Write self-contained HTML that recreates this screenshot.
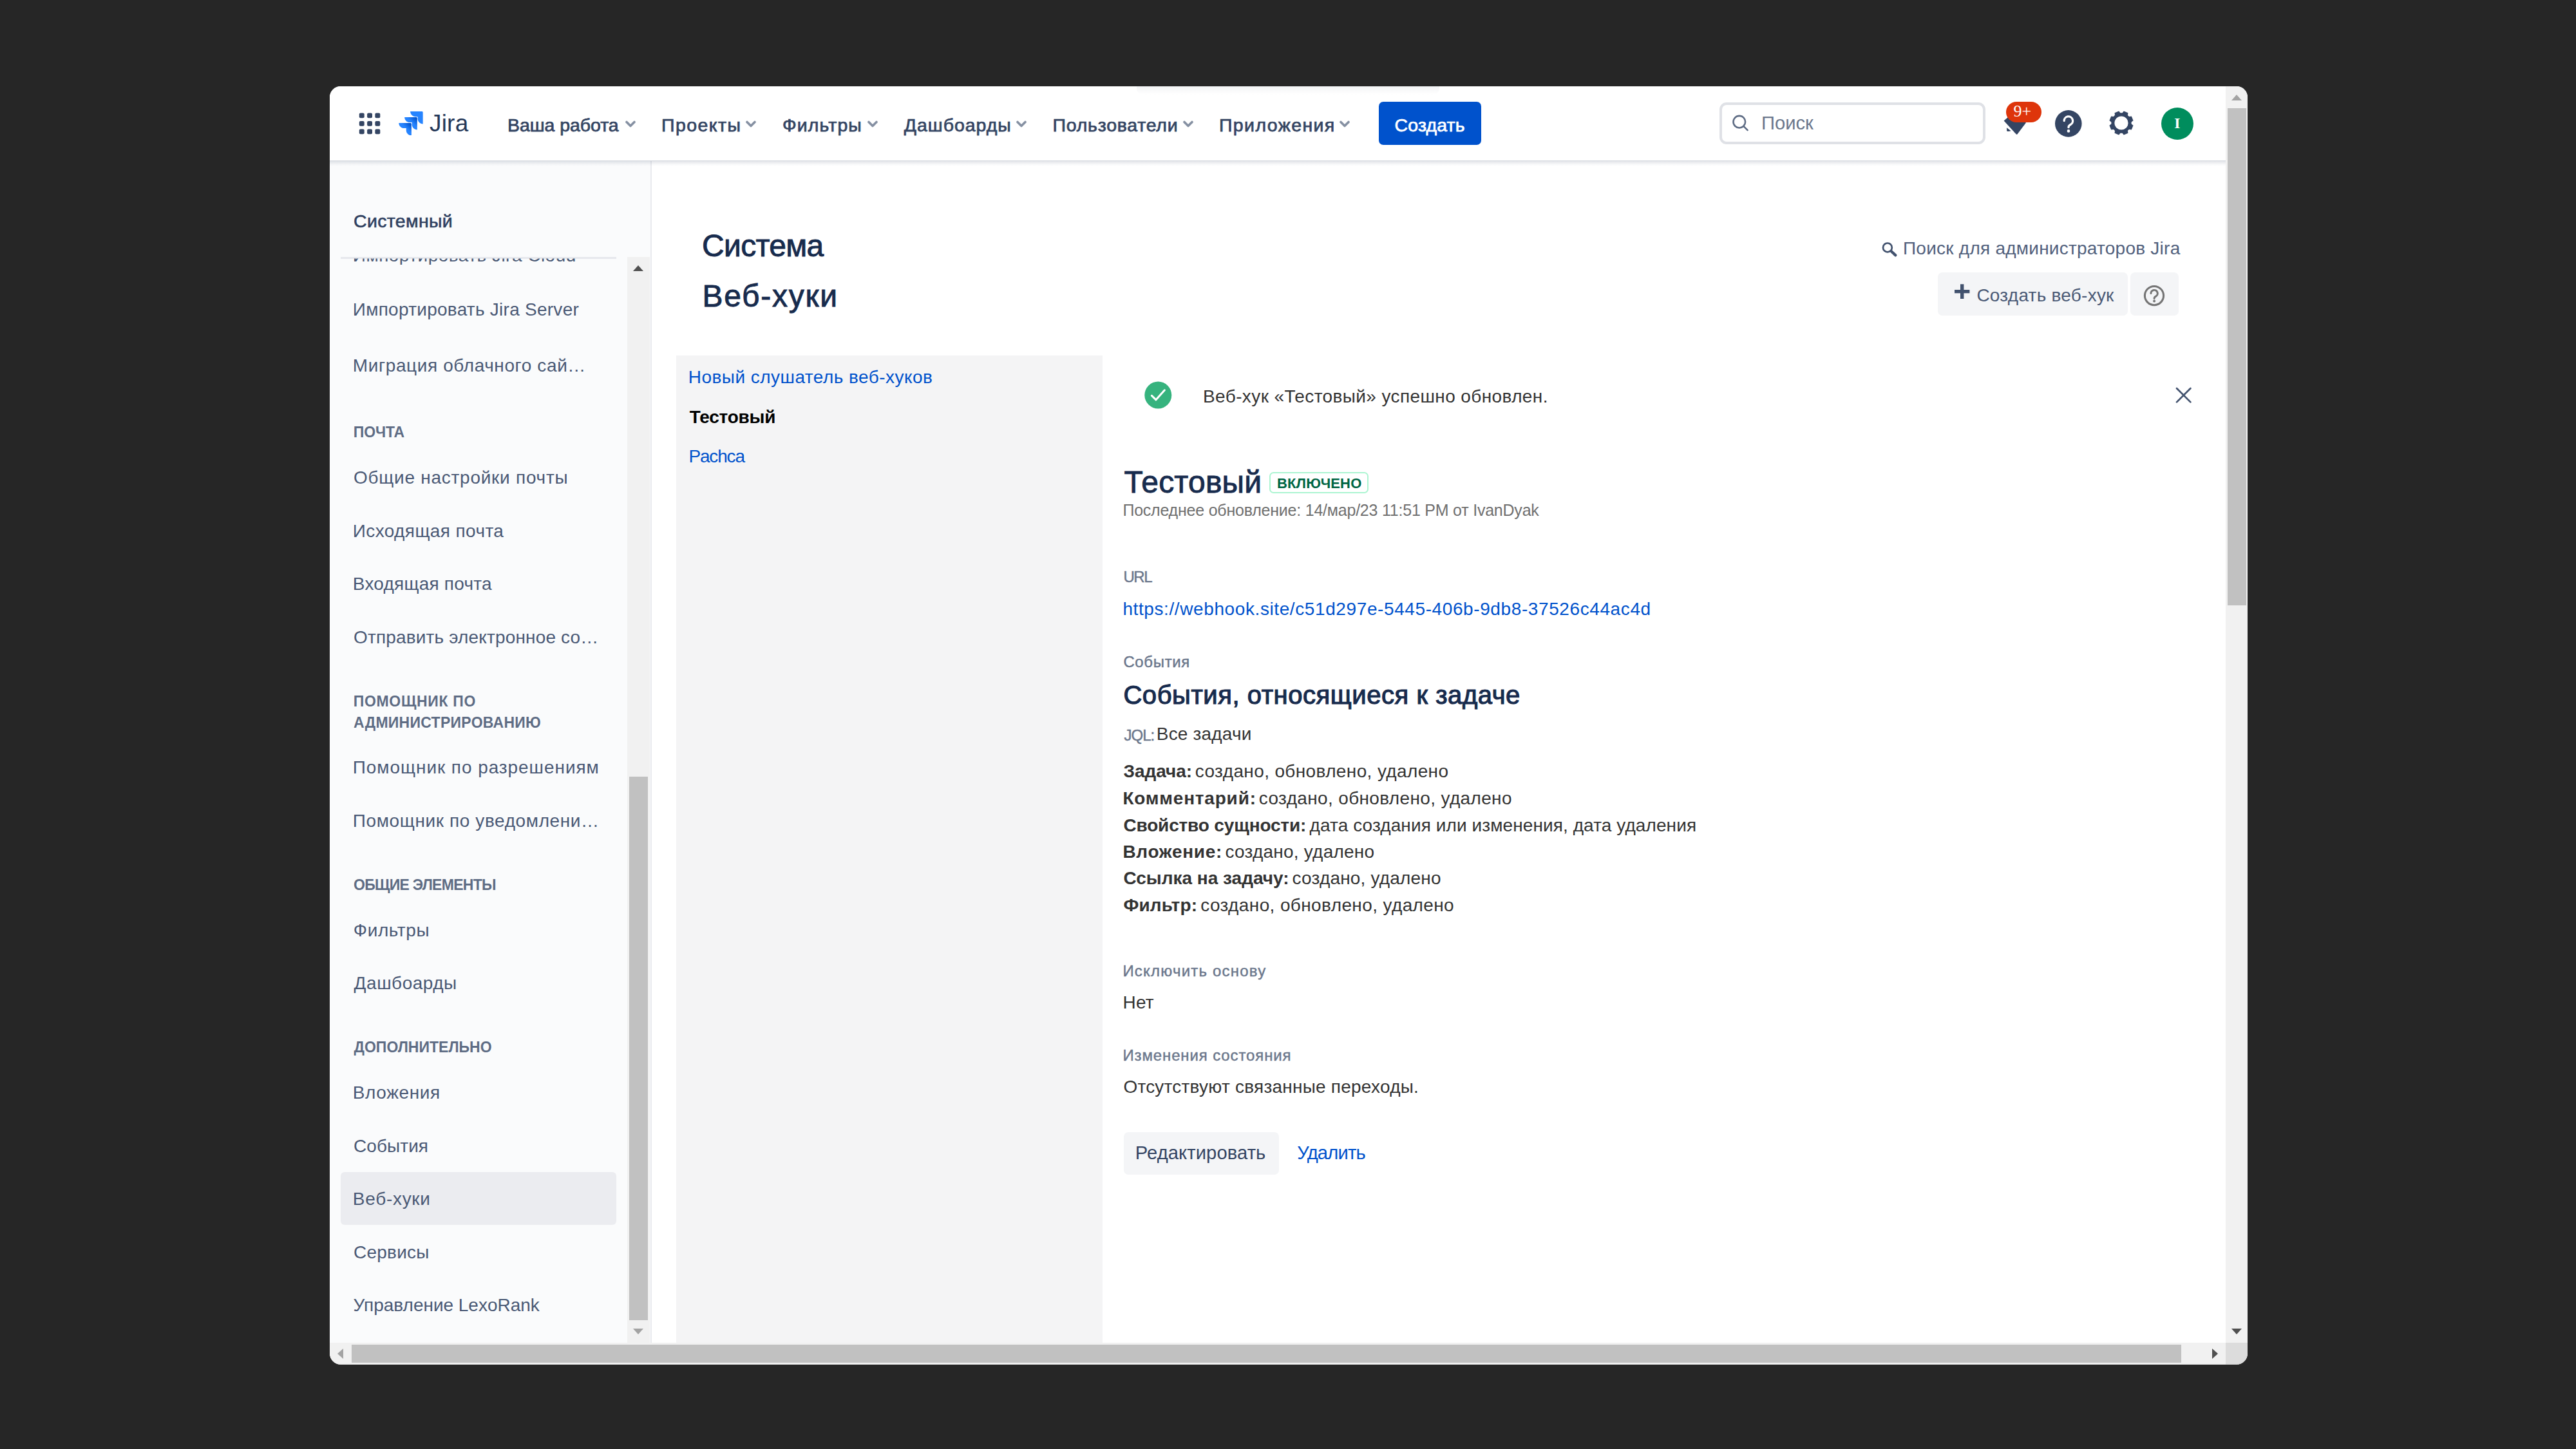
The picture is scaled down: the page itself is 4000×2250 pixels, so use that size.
<!DOCTYPE html>
<html lang="ru">
<head>
<meta charset="utf-8">
<title>Веб-хуки - Jira</title>
<style>
html,body{margin:0;padding:0}
body{width:4000px;height:2250px;overflow:hidden;position:relative;background:#262626;font-family:"Liberation Sans",sans-serif;}
#win{position:absolute;left:0;top:0;width:4000px;height:2250px;clip-path:inset(134px 510px 131.3px 512px round 17px);background:#fff}
#win div,#win span,#win svg{position:absolute}
.t{white-space:nowrap;line-height:1;display:block}
.box{display:block}
.nav{-webkit-text-stroke:0.75px currentColor}
.nav2{-webkit-text-stroke:0.6px currentColor}
.hd{-webkit-text-stroke:0.9px currentColor}
.h3{-webkit-text-stroke:1.15px currentColor}
.lbl{-webkit-text-stroke:0.45px currentColor}
</style>
</head>
<body>
<div id="win">

<!-- main white area + sidebar -->
<div class="box" style="left:512px;top:250px;width:498px;height:1836px;background:#fafbfc"></div>
<div class="box" style="left:1010px;top:250px;width:2px;height:1836px;background:#e9eaee"></div>

<!-- top navigation -->
<div class="box" style="left:512px;top:249px;width:2944px;height:9px;background:linear-gradient(to bottom,rgba(9,30,66,0.16) 0,rgba(9,30,66,0.10) 2px,rgba(9,30,66,0.03) 6px,rgba(9,30,66,0) 9px)"></div>
<div class="box" style="left:512px;top:134px;width:2944px;height:115px;background:#fff"></div>

<div class="box" style="left:1765px;top:134px;width:470px;height:13px;background:linear-gradient(to bottom,rgba(9,30,66,0.05),rgba(9,30,66,0));border-radius:0 0 10px 10px"></div>

<!-- app switcher -->
<svg style="left:557px;top:175px" width="35" height="35" viewBox="0 0 35 35"><g fill="#344563">
<rect x="0.8" y="0.4" width="7.9" height="7.9" rx="2"/><rect x="13.1" y="0.4" width="7.9" height="7.9" rx="2"/><rect x="25.4" y="0.4" width="7.9" height="7.9" rx="2"/>
<rect x="0.8" y="12.9" width="7.9" height="7.9" rx="2"/><rect x="13.1" y="12.9" width="7.9" height="7.9" rx="2"/><rect x="25.4" y="12.9" width="7.9" height="7.9" rx="2"/>
<rect x="0.8" y="25.4" width="7.9" height="7.9" rx="2"/><rect x="13.1" y="25.4" width="7.9" height="7.9" rx="2"/><rect x="25.4" y="25.4" width="7.9" height="7.9" rx="2"/>
</g></svg>

<!-- Jira logo -->
<svg style="left:619px;top:172.6px" width="38" height="37.4" viewBox="0 4 23.93 23.93">
<defs>
<linearGradient id="jg1" x1="98%" y1="0%" x2="58%" y2="41%"><stop offset="18%" stop-color="#0052CC"/><stop offset="100%" stop-color="#2684FF"/></linearGradient>
</defs>
<path fill="#2684FF" d="M22.937 4H11.41c0 2.87 2.327 5.2 5.2 5.2h2.123v2.053c0 2.87 2.327 5.197 5.197 5.197V5c0-.55-.443-1-.993-1"/>
<path fill="url(#jg1)" d="M17.233 9.743H5.707c0 2.87 2.326 5.2 5.2 5.2h2.123v2.05c0 2.87 2.33 5.197 5.2 5.197V10.74c0-.55-.447-.997-.997-.997"/>
<path fill="url(#jg1)" d="M11.527 15.483H0c0 2.874 2.327 5.2 5.2 5.2h2.123v2.05c0 2.870 2.327 5.197 5.197 5.197V16.48c0-.55-.443-.997-.993-.997"/>
</svg>
<span class="t" style="left:667px;top:172.5px;font-size:37px;color:#253858;letter-spacing:0.2px">Jira</span>

<!-- nav chevrons -->
<svg style="left:971px;top:187px" width="16" height="12" viewBox="0 0 16 12"><path d="M2 2.5 L8 8.5 L14 2.5" fill="none" stroke="#8590a2" stroke-width="3.6" stroke-linecap="round" stroke-linejoin="round"/></svg>
<svg style="left:1157.5px;top:187px" width="16" height="12" viewBox="0 0 16 12"><path d="M2 2.5 L8 8.5 L14 2.5" fill="none" stroke="#8590a2" stroke-width="3.6" stroke-linecap="round" stroke-linejoin="round"/></svg>
<svg style="left:1346.5px;top:187px" width="16" height="12" viewBox="0 0 16 12"><path d="M2 2.5 L8 8.5 L14 2.5" fill="none" stroke="#8590a2" stroke-width="3.6" stroke-linecap="round" stroke-linejoin="round"/></svg>
<svg style="left:1578px;top:187px" width="16" height="12" viewBox="0 0 16 12"><path d="M2 2.5 L8 8.5 L14 2.5" fill="none" stroke="#8590a2" stroke-width="3.6" stroke-linecap="round" stroke-linejoin="round"/></svg>
<svg style="left:1837px;top:187px" width="16" height="12" viewBox="0 0 16 12"><path d="M2 2.5 L8 8.5 L14 2.5" fill="none" stroke="#8590a2" stroke-width="3.6" stroke-linecap="round" stroke-linejoin="round"/></svg>
<svg style="left:2080px;top:187px" width="16" height="12" viewBox="0 0 16 12"><path d="M2 2.5 L8 8.5 L14 2.5" fill="none" stroke="#8590a2" stroke-width="3.6" stroke-linecap="round" stroke-linejoin="round"/></svg>

<!-- create button -->
<div class="box" style="left:2141px;top:158px;width:159px;height:67px;border-radius:7px;background:#0052cc"></div>

<!-- search box -->
<div class="box" style="left:2670px;top:158.5px;width:405px;height:57.5px;border:4px solid #dfe1e6;border-radius:11px;background:#fff"></div>
<svg style="left:2686px;top:176px" width="34" height="34" viewBox="0 0 34 34"><circle cx="14.8" cy="13.2" r="9.3" fill="none" stroke="#5e6c84" stroke-width="2.6"/><path d="M21.6 20.2 L27.6 26.2" stroke="#5e6c84" stroke-width="2.6" stroke-linecap="round"/></svg>

<!-- notifications -->
<svg style="left:3100px;top:170px" width="60" height="46" viewBox="3100 170 60 46"><g fill="#344563"><path d="M3111.6 187.6 L3125 176 L3146 190.4 L3132.6 208.3 Q3131.8 209.2 3130.8 208.4 Z"/><path d="M3116 198.2 L3122.6 203.2 Q3119 204.6 3116.2 203.4 Z"/></g></svg>
<div class="box" style="left:3115px;top:157.5px;width:55px;height:32.5px;border-radius:16.5px;background:#de350b"></div>
<span class="t" style="left:3126.6px;top:160.4px;font-size:26px;color:#fff;font-family:'Liberation Serif',serif">9+</span>

<!-- help -->
<svg style="left:3190px;top:170px" width="44" height="44" viewBox="0 0 44 44"><circle cx="21.8" cy="21.9" r="20.8" fill="#344563"/><path d="M15.2 17.6 a6.7 6.7 0 1 1 9.8 5.9 c-2.3 1.3 -3 2.2 -3 4.2" fill="none" stroke="#fff" stroke-width="3.3" stroke-linecap="round"/><circle cx="22" cy="33.4" r="2.3" fill="#fff"/></svg>

<!-- settings gear -->
<svg style="left:3272.7px;top:170.2px" width="42" height="42" viewBox="-21 -21 42 42"><g fill="#344563" transform="rotate(22.5)"><circle r="15.6"/><path transform="rotate(0)" d="M-5.2 -13 L-3.6 -18.6 L3.6 -18.6 L5.2 -13 Z"/><path transform="rotate(45)" d="M-5.2 -13 L-3.6 -18.6 L3.6 -18.6 L5.2 -13 Z"/><path transform="rotate(90)" d="M-5.2 -13 L-3.6 -18.6 L3.6 -18.6 L5.2 -13 Z"/><path transform="rotate(135)" d="M-5.2 -13 L-3.6 -18.6 L3.6 -18.6 L5.2 -13 Z"/><path transform="rotate(180)" d="M-5.2 -13 L-3.6 -18.6 L3.6 -18.6 L5.2 -13 Z"/><path transform="rotate(225)" d="M-5.2 -13 L-3.6 -18.6 L3.6 -18.6 L5.2 -13 Z"/><path transform="rotate(270)" d="M-5.2 -13 L-3.6 -18.6 L3.6 -18.6 L5.2 -13 Z"/><path transform="rotate(315)" d="M-5.2 -13 L-3.6 -18.6 L3.6 -18.6 L5.2 -13 Z"/></g><circle r="10.6" fill="#fff"/></svg>

<!-- avatar -->
<div class="box" style="left:3356px;top:166.5px;width:50px;height:50px;border-radius:25px;background:#008d5d"></div>
<span class="t" style="left:3376.3px;top:179.6px;font-size:23.5px;font-weight:700;color:#fff;font-family:'Liberation Serif',serif">I</span>

<!-- sidebar header divider + clipped item -->
<div class="box" style="left:528.5px;top:399px;width:428.5px;height:2.5px;background:#e6e8ed"></div>

<!-- sidebar selected item -->
<div class="box" style="left:528.5px;top:1820px;width:428.5px;height:82px;border-radius:6px;background:#ebecf0"></div>

<!-- sidebar scrollbar -->
<div class="box" style="left:974px;top:399px;width:35px;height:1687px;background:#f1f1f1"></div>
<div class="box" style="left:977px;top:1206px;width:28.5px;height:844px;background:#c1c1c1"></div>
<svg style="left:982px;top:411px" width="18" height="11" viewBox="0 0 18 11"><path d="M1 10 L9 1 L17 10 Z" fill="#505050"/></svg>
<svg style="left:982px;top:2061.5px" width="18" height="11" viewBox="0 0 18 11"><path d="M1 1 L9 10 L17 1 Z" fill="#a3a3a3"/></svg>

<!-- webhook list panel -->
<div class="box" style="left:1049.5px;top:551.5px;width:662px;height:1534px;background:#f4f4f5"></div>

<!-- header actions -->
<svg style="left:2920px;top:374px" width="30" height="28" viewBox="0 0 30 28"><circle cx="10.9" cy="10.4" r="6.9" fill="none" stroke="#42526e" stroke-width="2.7"/><path d="M16.6 16 L23.4 22.4" stroke="#42526e" stroke-width="4.2" stroke-linecap="round"/></svg>
<div class="box" style="left:3009px;top:423px;width:295px;height:67px;border-radius:7px;background:#f4f5f7"></div>
<svg style="left:3034px;top:440px" width="26" height="26" viewBox="0 0 26 26"><path d="M12.7 1.2 V24 M1 12.6 H24.4" stroke="#42526e" stroke-width="5.4" stroke-linecap="butt"/></svg>
<div class="box" style="left:3308px;top:423px;width:74.5px;height:67px;border-radius:7px;background:#f4f5f7"></div>
<svg style="left:3327px;top:440.5px" width="36" height="36" viewBox="0 0 36 36"><circle cx="18" cy="18.1" r="14.6" fill="none" stroke="#757575" stroke-width="3.1"/><path d="M12.9 14.6 a5.2 5.2 0 1 1 7.6 4.6 c-1.7 0.9 -2.4 1.7 -2.4 3.4" fill="none" stroke="#757575" stroke-width="3" stroke-linecap="round"/><circle cx="18.1" cy="26.6" r="2" fill="#757575"/></svg>

<!-- success message -->
<svg style="left:1776px;top:591px" width="45" height="45" viewBox="0 0 45 45"><circle cx="22.3" cy="22.5" r="21" fill="#36b37e"/><path d="M12.4 23.4 L19 29.8 L32.4 14.8" fill="none" stroke="#fff" stroke-width="3" stroke-linecap="round" stroke-linejoin="round"/></svg>
<svg style="left:3376px;top:599px" width="30" height="30" viewBox="0 0 30 30"><path d="M4 4 L25.4 25.4 M25.4 4 L4 25.4" stroke="#42526e" stroke-width="2.7" stroke-linecap="round"/></svg>

<!-- lozenge -->
<div class="box" style="left:1970.7px;top:733.4px;width:150.6px;height:28.4px;border:2px solid #abf5d1;border-radius:6.5px;background:#fff"></div>

<!-- buttons -->
<div class="box" style="left:1745px;top:1757.5px;width:240.5px;height:66px;border-radius:7px;background:#f4f5f7"></div>

<!-- page vertical scrollbar -->
<div class="box" style="left:3455.7px;top:134px;width:35px;height:1952px;background:#f1f1f1"></div>
<div class="box" style="left:3459px;top:168px;width:28.5px;height:772px;background:#c1c1c1"></div>
<svg style="left:3464px;top:146px" width="18" height="11" viewBox="0 0 18 11"><path d="M1 10 L9 1 L17 10 Z" fill="#a3a3a3"/></svg>
<svg style="left:3464px;top:2061.5px" width="18" height="11" viewBox="0 0 18 11"><path d="M1 1 L9 10 L17 1 Z" fill="#505050"/></svg>

<!-- horizontal scrollbar -->
<div class="box" style="left:512px;top:2085.3px;width:2944px;height:34px;background:#f1f1f1"></div>
<div class="box" style="left:546.3px;top:2088px;width:2841px;height:27.5px;background:#c1c1c1"></div>
<svg style="left:523px;top:2093px" width="11" height="18" viewBox="0 0 11 18"><path d="M10 1 L1 9 L10 17 Z" fill="#a3a3a3"/></svg>
<svg style="left:3434px;top:2093px" width="11" height="18" viewBox="0 0 11 18"><path d="M1 1 L10 9 L1 17 Z" fill="#505050"/></svg>
<div class="box" style="left:3455.7px;top:2085.3px;width:35px;height:34px;background:#dcdcdc"></div>

<span class="t nav" style="left:788.0px;top:179.9px;font-size:28.5px;color:#344563;letter-spacing:-0.06px;">Ваша работа</span>
<span class="t nav" style="left:1027.0px;top:179.9px;font-size:28.5px;color:#344563;letter-spacing:1.43px;">Проекты</span>
<span class="t nav" style="left:1215.0px;top:179.9px;font-size:28.5px;color:#344563;letter-spacing:1.10px;">Фильтры</span>
<span class="t nav" style="left:1403.8px;top:179.9px;font-size:28.5px;color:#344563;letter-spacing:0.95px;">Дашбоарды</span>
<span class="t nav" style="left:1634.6px;top:179.9px;font-size:28.5px;color:#344563;letter-spacing:0.73px;">Пользователи</span>
<span class="t nav" style="left:1893.0px;top:179.9px;font-size:28.5px;color:#344563;letter-spacing:1.39px;">Приложения</span>
<span class="t nav" style="left:2165.6px;top:179.9px;font-size:28.5px;color:#ffffff;letter-spacing:0.12px;">Создать</span>
<span class="t" style="left:2735.0px;top:176.6px;font-size:29.17px;color:#6b778c;">Поиск</span>
<span class="t nav2" style="left:549.0px;top:328.5px;font-size:28.5px;color:#2f4060;letter-spacing:0.34px;">Системный</span>
<span class="t" style="left:547.8px;top:383.0px;font-size:28px;color:#4a5975;letter-spacing:0.48px;clip-path:inset(18.6px 0 0 0);">Импортировать Jira Cloud</span>
<span class="t" style="left:547.8px;top:467.1px;font-size:28px;color:#4a5975;letter-spacing:0.26px;">Импортировать Jira Server</span>
<span class="t" style="left:547.8px;top:554.1px;font-size:28px;color:#4a5975;letter-spacing:0.60px;">Миграция облачного сай…</span>
<span class="t" style="left:548.8px;top:660.0px;font-size:23px;font-weight:700;color:#5e6c84;letter-spacing:-0.10px;">ПОЧТА</span>
<span class="t" style="left:549.0px;top:727.7px;font-size:28px;color:#4a5975;letter-spacing:0.74px;">Общие настройки почты</span>
<span class="t" style="left:547.8px;top:810.8px;font-size:28px;color:#4a5975;letter-spacing:0.39px;">Исходящая почта</span>
<span class="t" style="left:547.8px;top:893.0px;font-size:28px;color:#4a5975;letter-spacing:0.22px;">Входящая почта</span>
<span class="t" style="left:549.0px;top:975.8px;font-size:28px;color:#4a5975;letter-spacing:0.16px;">Отправить электронное со…</span>
<span class="t" style="left:548.8px;top:1077.9px;font-size:23px;font-weight:700;color:#5e6c84;letter-spacing:0.66px;">ПОМОЩНИК ПО</span>
<span class="t" style="left:549.0px;top:1110.5px;font-size:23px;font-weight:700;color:#5e6c84;letter-spacing:0.27px;">АДМИНИСТРИРОВАНИЮ</span>
<span class="t" style="left:547.8px;top:1178.3px;font-size:28px;color:#4a5975;letter-spacing:0.93px;">Помощник по разрешениям</span>
<span class="t" style="left:547.8px;top:1261.1px;font-size:28px;color:#4a5975;letter-spacing:0.61px;">Помощник по уведомлени…</span>
<span class="t" style="left:549.0px;top:1362.9px;font-size:23px;font-weight:700;color:#5e6c84;letter-spacing:-0.71px;">ОБЩИЕ ЭЛЕМЕНТЫ</span>
<span class="t" style="left:548.8px;top:1431.0px;font-size:28px;color:#4a5975;letter-spacing:0.60px;">Фильтры</span>
<span class="t" style="left:549.6px;top:1513.1px;font-size:28px;color:#4a5975;letter-spacing:0.51px;">Дашбоарды</span>
<span class="t" style="left:549.6px;top:1614.9px;font-size:23px;font-weight:700;color:#5e6c84;">ДОПОЛНИТЕЛЬНО</span>
<span class="t" style="left:547.8px;top:1683.0px;font-size:28px;color:#4a5975;letter-spacing:0.60px;">Вложения</span>
<span class="t" style="left:549.0px;top:1766.1px;font-size:28px;color:#4a5975;letter-spacing:0.07px;">События</span>
<span class="t" style="left:547.8px;top:1847.9px;font-size:28px;color:#4a5975;letter-spacing:0.71px;">Веб-хуки</span>
<span class="t" style="left:549.0px;top:1931.0px;font-size:28px;color:#4a5975;letter-spacing:0.23px;">Сервисы</span>
<span class="t" style="left:548.6px;top:2013.1px;font-size:28px;color:#4a5975;letter-spacing:-0.02px;">Управление LexoRank</span>
<span class="t hd" style="left:1090.0px;top:357.8px;font-size:48px;color:#172b4d;letter-spacing:-0.67px;">Система</span>
<span class="t hd" style="left:1090.4px;top:436.0px;font-size:48px;color:#172b4d;letter-spacing:1.76px;">Веб-хуки</span>
<span class="t" style="left:2955.0px;top:371.8px;font-size:28px;color:#52617d;letter-spacing:0.24px;">Поиск для администраторов Jira</span>
<span class="t" style="left:3069.4px;top:445.1px;font-size:28px;color:#4a5975;letter-spacing:0.24px;">Создать веб-хук</span>
<span class="t" style="left:1068.8px;top:571.7px;font-size:28px;color:#0052cc;letter-spacing:0.46px;">Новый слушатель веб-хуков</span>
<span class="t" style="left:1070.8px;top:633.5px;font-size:28px;font-weight:700;color:#000000;letter-spacing:-0.24px;">Тестовый</span>
<span class="t" style="left:1069.4px;top:695.3px;font-size:28px;color:#0052cc;letter-spacing:-1.16px;">Pachca</span>
<span class="t" style="left:1868.0px;top:602.3px;font-size:28px;color:#333333;letter-spacing:0.39px;">Веб-хук «Тестовый» успешно обновлен.</span>
<span class="t hd" style="left:1745.4px;top:725.2px;font-size:48px;color:#172b4d;letter-spacing:0.21px;">Тестовый</span>
<span class="t" style="left:1983.0px;top:740.2px;font-size:22px;font-weight:700;color:#006644;letter-spacing:0.14px;">ВКЛЮЧЕНО</span>
<span class="t" style="left:1743.4px;top:780.1px;font-size:25px;color:#707070;letter-spacing:-0.22px;">Последнее обновление: 14/мар/23 11:51 PM от IvanDyak</span>
<span class="t lbl" style="left:1744.4px;top:883.6px;font-size:24px;color:#6b778c;letter-spacing:-1.35px;">URL</span>
<span class="t" style="left:1743.4px;top:932.1px;font-size:28px;color:#0052cc;letter-spacing:0.60px;">https://webhook.site/c51d297e-5445-406b-9db8-37526c44ac4d</span>
<span class="t lbl" style="left:1744.4px;top:1015.5px;font-size:24px;color:#6b778c;letter-spacing:0.65px;">События</span>
<span class="t h3" style="left:1744.4px;top:1059.1px;font-size:40px;color:#172b4d;letter-spacing:0.56px;">События, относящиеся к задаче</span>
<span class="t lbl" style="left:1745.4px;top:1129.6px;font-size:24px;color:#6b778c;letter-spacing:-0.93px;">JQL:</span>
<span class="t" style="left:1795.8px;top:1126.2px;font-size:28px;color:#333333;letter-spacing:0.18px;">Все задачи</span>
<span class="t" style="left:1744.4px;top:1184.3px;font-size:28px;font-weight:700;color:#333333;letter-spacing:-0.05px;">Задача:</span>
<span class="t" style="left:1855.8px;top:1184.3px;font-size:28px;color:#333333;letter-spacing:0.37px;">создано, обновлено, удалено</span>
<span class="t" style="left:1743.4px;top:1226.1px;font-size:28px;font-weight:700;color:#333333;letter-spacing:0.79px;">Комментарий:</span>
<span class="t" style="left:1954.8px;top:1226.1px;font-size:28px;color:#333333;letter-spacing:0.35px;">создано, обновлено, удалено</span>
<span class="t" style="left:1744.4px;top:1267.5px;font-size:28px;font-weight:700;color:#333333;letter-spacing:-0.16px;">Свойство сущности:</span>
<span class="t" style="left:2033.6px;top:1267.5px;font-size:28px;color:#333333;letter-spacing:0.09px;">дата создания или изменения, дата удаления</span>
<span class="t" style="left:1743.4px;top:1308.7px;font-size:28px;font-weight:700;color:#333333;letter-spacing:0.69px;">Вложение:</span>
<span class="t" style="left:1902.4px;top:1308.7px;font-size:28px;color:#333333;letter-spacing:0.23px;">создано, удалено</span>
<span class="t" style="left:1744.4px;top:1350.0px;font-size:28px;font-weight:700;color:#333333;letter-spacing:-0.01px;">Ссылка на задачу:</span>
<span class="t" style="left:2006.6px;top:1350.0px;font-size:28px;color:#333333;letter-spacing:0.18px;">создано, удалено</span>
<span class="t" style="left:1744.4px;top:1391.5px;font-size:28px;font-weight:700;color:#333333;letter-spacing:0.13px;">Фильтр:</span>
<span class="t" style="left:1864.2px;top:1391.5px;font-size:28px;color:#333333;letter-spacing:0.38px;">создано, обновлено, удалено</span>
<span class="t lbl" style="left:1743.4px;top:1496.1px;font-size:24px;color:#6b778c;letter-spacing:1.21px;">Исключить основу</span>
<span class="t" style="left:1743.4px;top:1543.1px;font-size:28px;color:#333333;letter-spacing:0.30px;">Нет</span>
<span class="t lbl" style="left:1743.4px;top:1626.9px;font-size:24px;color:#6b778c;letter-spacing:0.88px;">Изменения состояния</span>
<span class="t" style="left:1744.4px;top:1673.9px;font-size:28px;color:#333333;letter-spacing:0.23px;">Отсутствуют связанные переходы.</span>
<span class="t" style="left:1762.8px;top:1776.3px;font-size:29.17px;color:#344563;letter-spacing:0.09px;">Редактировать</span>
<span class="t" style="left:2014.2px;top:1776.3px;font-size:29.17px;color:#0052cc;letter-spacing:-0.80px;">Удалить</span>
</div>
</body>
</html>
